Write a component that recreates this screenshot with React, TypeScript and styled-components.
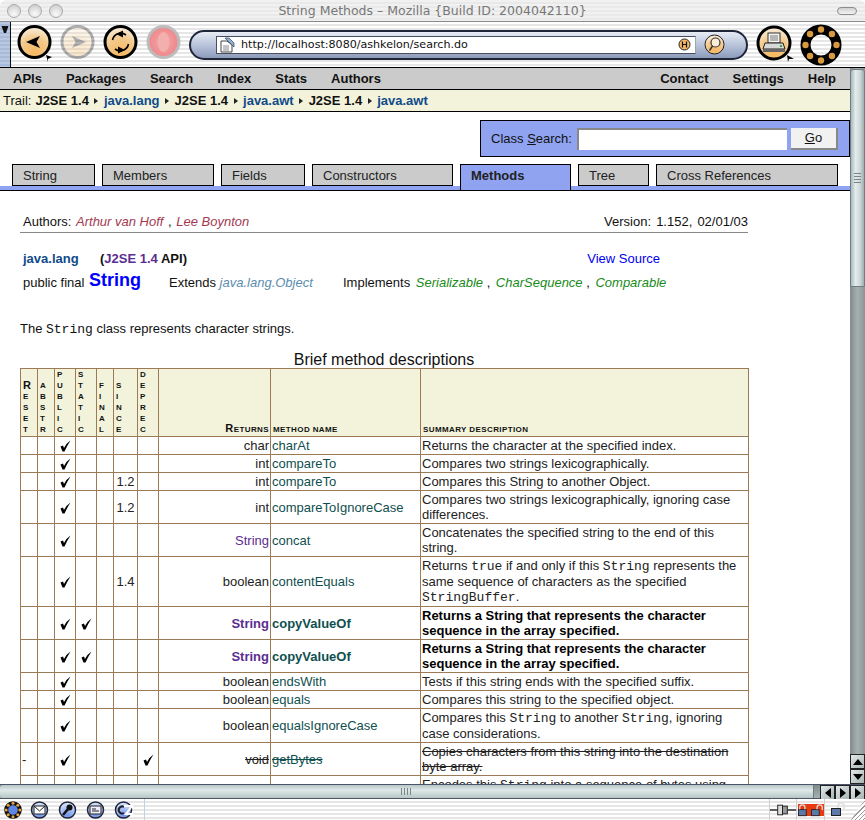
import React from "react";
import styled, { createGlobalStyle } from "styled-components";

const GlobalStyle = createGlobalStyle`
    html, body {
        margin: 0;
        padding: 0;
        background: #fff;
        overflow: hidden;
    }
    body {
        font-family: "Liberation Sans", Arial, sans-serif;
        font-size: 13px;
        color: #111;
    }
`;

const Win = styled.div`
    width: 865px;
    height: 820px;
    display: flex;
    flex-direction: column;
    overflow: hidden;
`;

const pinstripe = `repeating-linear-gradient(180deg, #ffffff 0, #ffffff 2px, #e6e6e6 2px, #e6e6e6 4px)`;

const TitleBar = styled.div`
    height: 21px;
    flex: none;
    display: flex;
    align-items: center;
    position: relative;
    background: repeating-linear-gradient(180deg, #f1f1f1 0, #f1f1f1 2px, #e9e9e9 2px, #e9e9e9 4px);
    border-bottom: 1px solid #8a8a8a;
    border-radius: 6px 6px 0 0;
`;

const Lights = styled.div`
    display: flex;
    gap: 7px;
    padding-left: 7px;
`;

const Light = styled.span`
    width: 14px;
    height: 14px;
    border-radius: 50%;
    border: 1px solid #a8a8a8;
    box-sizing: border-box;
    background: radial-gradient(circle at 50% 75%, #fafafa 0, #dedede 55%, #c4c4c4 100%);
`;

const WinTitle = styled.div`
    flex: 1;
    text-align: center;
    font-family: "DejaVu Sans", sans-serif;
    font-size: 12.5px;
    color: #777;
    margin-right: 35px;
`;

const Pill = styled.span`
    width: 20px;
    height: 8px;
    border: 1px solid #8c8c8c;
    border-radius: 5px;
    box-sizing: border-box;
    margin-right: 8px;
    background: linear-gradient(180deg, #d0d0d0, #f4f4f4);
`;

const Toolbar = styled.div`
    height: 45px;
    flex: none;
    display: flex;
    align-items: center;
    background: ${pinstripe};
    border-bottom: 1px solid #000;
`;

const Grip = styled.div`
    width: 10px;
    align-self: stretch;
    border-right: 1px solid #111;
    background: repeating-linear-gradient(180deg, #b9c8e2 0, #b9c8e2 2px, #a9bad8 2px, #a9bad8 4px);
    display: flex;
    justify-content: center;
    padding-top: 4px;
    margin-right: 2px;
`;

const NavButtons = styled.div`
    display: flex;
    margin-right: 4px;
`;

const UrlPill = styled.div`
    width: 559px;
    height: 30px;
    box-sizing: border-box;
    border: 2px solid #20263a;
    border-radius: 15px;
    background: linear-gradient(180deg, #e6ebf4 0, #bdc8de 45%, #8d9bbb 100%);
    display: flex;
    align-items: center;
    padding-left: 25px;
`;

const UrlField = styled.div`
    width: 480px;
    height: 18px;
    box-sizing: border-box;
    background: #fff;
    border: 1px solid #4a4f60;
    border-right-color: #9aa;
    display: flex;
    align-items: center;
    padding: 0 4px 0 2px;
    font-family: "DejaVu Sans", sans-serif;
    font-size: 11.1px;
    color: #111;
    margin-right: 8px;
`;

const UrlText = styled.span`
    margin-left: 6px;
    flex: 1;
`;

const PrintWrap = styled.div`
    margin-left: 6px;
    display: flex;
`;

const Middle = styled.div`
    flex: 1;
    min-height: 0;
    display: flex;
`;

const Viewport = styled.div`
    width: 850px;
    flex: none;
    overflow: hidden;
    background: #fff;
`;

const VTrack = styled.div`
    width: 15px;
    flex: none;
    display: flex;
    flex-direction: column;
    background: linear-gradient(90deg, #7f8c8c, #a7b0b0 50%, #8b9696);
`;

const VThumb = styled.div`
    height: 218px;
    margin-top: 1px;
    border-radius: 3px 3px 0 0;
    border: 1px solid #6e7c84;
    box-sizing: border-box;
    background: linear-gradient(90deg, #a9b9b9 0, #e4ecec 35%, #cdd8d8 70%, #9eaeae 100%);
    display: flex;
    align-items: center;
    justify-content: center;
`;

const GripLinesH = styled.div`
    width: 7px;
    height: 11px;
    background: repeating-linear-gradient(180deg, #7a8686 0, #7a8686 1px, transparent 1px, transparent 3px);
`;

const Spacer = styled.div`
    flex: 1;
`;

const ArrowBtn = styled.div`
    width: 15px;
    height: 15px;
    flex: none;
    box-sizing: border-box;
    border: 1px solid #222;
    background: linear-gradient(135deg, #e2e8e8, #a8b4b4);
    display: flex;
    align-items: center;
    justify-content: center;
`;

const HBar = styled.div`
    height: 15px;
    flex: none;
    display: flex;
    border-top: 1px solid #4a5568;
    border-bottom: 1px solid #4a5568;
    box-sizing: border-box;
    background: linear-gradient(180deg, #7f8c8c, #a7b0b0);
`;

const HThumb = styled.div`
    width: 814px;
    flex: none;
    border-radius: 3px 0 0 3px;
    border-right: 1px solid #6e7c84;
    box-sizing: border-box;
    background: linear-gradient(180deg, #b7c6c6 0, #e0e9e9 40%, #b6c5c5 100%);
    display: flex;
    align-items: center;
    justify-content: center;
`;

const GripLinesV = styled.div`
    width: 11px;
    height: 7px;
    background: repeating-linear-gradient(90deg, #7a8686 0, #7a8686 1px, transparent 1px, transparent 3px);
`;

const HGap = styled.div`
    width: 6px;
    flex: none;
`;

const StatusBar = styled.div`
    height: 21px;
    flex: none;
    display: flex;
    align-items: center;
    background: ${pinstripe};
`;

const StatusIcons = styled.div`
    width: 145px;
    height: 100%;
    flex: none;
    border-right: 1px solid #c4d0e0;
    display: flex;
    align-items: center;
    gap: 7px;
    padding-left: 4px;
    box-sizing: border-box;
`;

const StatusRight = styled.div`
    margin-left: auto;
    display: flex;
    align-items: center;
    height: 100%;
`;

const StatusCell = styled.div<{ $w: number }>`
    width: ${p => p.$w}px;
    height: 100%;
    box-sizing: border-box;
    display: flex;
    align-items: center;
    justify-content: center;
    border-left: 1px solid #d0d0d0;
`;

const Corner = styled.div`
    width: 14px;
    height: 100%;
    background: repeating-linear-gradient(135deg, #fff 0, #fff 2px, #9a9a9a 2px, #9a9a9a 3px);
    clip-path: polygon(100% 0, 100% 100%, 0 100%);
`;

const MenuBar = styled.div`
    height: 21px;
    background: #cbcbcb;
    border-bottom: 1px solid #000;
    padding: 0 14px 0 13px;
    display: flex;
    align-items: center;
    justify-content: space-between;
    font-weight: bold;
`;

const MenuGroup = styled.div`
    display: flex;
    gap: 24px;
`;

const Trail = styled.div`
    height: 21px;
    background: #f3f3dc;
    border-bottom: 1px solid #000;
    padding-left: 3px;
    display: flex;
    align-items: center;
    font-weight: bold;
`;

const TrailLabel = styled.span`
    font-weight: normal;
    margin-right: 4px;
`;

const TrailLink = styled.span`
    color: #0f4a8a;
`;

const TrailArrow = styled.span`
    width: 0;
    height: 0;
    margin: 0 5.5px;
    border-left: 4px solid #222;
    border-top: 3.5px solid transparent;
    border-bottom: 3.5px solid transparent;
`;

const SearchRow = styled.div`
    display: flex;
    justify-content: flex-end;
    padding-top: 8px;
`;

const SearchBox = styled.form`
    margin: 0;
    width: 370px;
    height: 37px;
    box-sizing: border-box;
    background: #8fa3f0;
    border: 1px solid #000;
    display: flex;
    align-items: center;
    padding-left: 10px;
`;

const SearchLabel = styled.label`
    margin-right: 5px;
`;

const Under = styled.span`
    text-decoration: underline;
`;

const SearchInput = styled.input`
    width: 210px;
    height: 22px;
    box-sizing: border-box;
    background: #fff;
    border: 0;
    border-top: 2px solid #888;
    border-left: 2px solid #888;
    padding: 0;
`;

const GoBtn = styled.button`
    width: 47px;
    height: 22px;
    margin-left: 4px;
    box-sizing: border-box;
    background: #f1f1f1;
    border: 0;
    border-bottom: 2px solid #888;
    border-right: 2px solid #888;
    font-family: inherit;
    font-size: 13px;
    color: #111;
    padding: 0;
`;

const TabRow = styled.div`
    display: flex;
    gap: 7px;
    padding: 7px 0 0 12px;
    height: 22px;
    border-bottom: 4px solid #8fa3f0;
`;

const TabLine = styled.div`
    height: 1px;
    background: #000;
`;

const Tab = styled.div<{ $w: number; $active?: boolean }>`
    width: ${p => p.$w}px;
    box-sizing: border-box;
    border: 1px solid #000;
    border-bottom: ${p => (p.$active ? "none" : "1px solid #000")};
    background: ${p => (p.$active ? "#8fa3f0" : "#cbcbcb")};
    font-weight: ${p => (p.$active ? "bold" : "normal")};
    padding: 3px 0 0 10px;
    height: ${p => (p.$active ? "26px" : "22px")};
    line-height: 15px;
    color: #222;
`;

const Page = styled.div`
    padding: 23px 0 0 20px;
    width: 728px;
`;

const AuthorRow = styled.div`
    display: flex;
    justify-content: space-between;
    height: 18px;
    line-height: 15px;
    padding-left: 3px;
    border-bottom: 1px solid #888;
`;

const AuthorName = styled.em`
    color: #a33a50;
    margin: 0 1px 0 1px;
`;

const Version = styled.span`
    word-spacing: 1.5px;
`;

const InfoBlock = styled.div`
    padding: 18px 0 0 3px;
    width: 637px;
`;

const PackageRow = styled.div`
    display: flex;
    height: 16px;
    line-height: 16px;
    font-weight: bold;
`;

const PackageName = styled.span`
    color: #0f4a8a;
    width: 77px;
`;

const Purple = styled.span`
    color: #5c2d91;
`;

const ViewSource = styled.span`
    margin-left: auto;
    color: #0000ee;
    font-weight: normal;
`;

const ClassRow = styled.div`
    display: grid;
    grid-template-columns: 146px 174px auto;
    align-items: start;
    margin-top: 3px;
    height: 24px;
    white-space: nowrap;
`;

const ClassLead = styled.span`
    line-height: 22px;
`;

const ClassCell = styled.span`
    padding-top: 5px;
    line-height: 15px;
`;

const ClassName = styled.strong`
    color: #0000ff;
    font-size: 18px;
    margin-left: 1px;
    position: relative;
    top: -1px;
`;

const SteelLink = styled.em`
    color: #5b8db0;
`;

const GreenLink = styled.em`
    color: #1a8a1a;
    margin-left: 2px;
`;

const Intro = styled.p`
    margin: 27px 0 0 0;
    line-height: 15px;
`;

const Mono = styled.code`
    font-family: "Liberation Mono", "Courier New", monospace;
    font-size: 13px;
`;

const Caption = styled.div`
    margin-top: 14px;
    font-size: 16px;
    line-height: 17px;
    text-align: center;
    width: 728px;
`;

const Table = styled.table`
    border-collapse: collapse;
    table-layout: fixed;
    width: 729px;
`;

const HeadCell = styled.th<{ $align?: string }>`
    background: #f3f3dc;
    border: 1px solid #9c7a55;
    padding: 0 1px 1px 2px;
    vertical-align: bottom;
    text-align: ${p => p.$align || "left"};
    font-size: 8px;
    font-weight: bold;
    line-height: 11px;
    letter-spacing: 0.4px;
    color: #111;
    text-transform: uppercase;
`;

const VLetter = styled.span<{ $big?: boolean }>`
    display: block;
    font-size: ${p => (p.$big ? "11px" : "8px")};
`;

const BigCap = styled.span`
    font-size: 11px;
`;

const Cell = styled.td<{ $align?: string; $bold?: boolean; $strike?: boolean; $color?: string }>`
    border: 1px solid #9c7a55;
    padding: 1px;
    line-height: 15px;
    font-size: 13px;
    text-align: ${p => p.$align || "left"};
    font-weight: ${p => (p.$bold ? "bold" : "normal")};
    text-decoration: ${p => (p.$strike ? "line-through" : "none")};
    color: ${p => p.$color || "#222"};
`;

const Check = styled.span`
    display: block;
    width: 10px;
    height: 11px;
    margin-left: 4px;
`;

const SecurityBadge = styled.div`
    width: 26px;
    height: 12px;
    background: #e83a10;
    display: flex;
    justify-content: center;
`;

function Gradients() {
    return (
        <svg width="0" height="0" style={{ position: "absolute" }}>
            <defs>
                <radialGradient id="orange" cx="50%" cy="85%" r="80%">
                    <stop offset="0" stopColor="#f6b860" />
                    <stop offset="0.6" stopColor="#f3c98c" />
                    <stop offset="1" stopColor="#f8ecd8" />
                </radialGradient>
                <radialGradient id="red" cx="50%" cy="50%" r="55%">
                    <stop offset="0" stopColor="#f4a8a8" />
                    <stop offset="1" stopColor="#ee8388" />
                </radialGradient>
                <radialGradient id="blueBtn" cx="50%" cy="85%" r="85%">
                    <stop offset="0" stopColor="#6f94ea" />
                    <stop offset="1" stopColor="#dfe8fa" />
                </radialGradient>
            </defs>
        </svg>
    );
}

function BackIcon() {
    return (
        <svg width="43" height="45" viewBox="0 0 43 45">
            <circle cx="21.5" cy="20" r="15.5" fill="url(#orange)" stroke="#000" strokeWidth="3" />
            <path d="M13 20 L27 14 L23.5 20 L27 26 Z" fill="#000" />
            <path d="M33 33 L39 35 L35 37 L35 40 Z" fill="#000" />
        </svg>
    );
}

function ForwardIcon() {
    return (
        <svg width="43" height="45" viewBox="0 0 43 45" opacity="0.3">
            <circle cx="21.5" cy="20" r="15.5" fill="url(#orange)" stroke="#000" strokeWidth="3" />
            <path d="M30 20 L16 14 L19.5 20 L16 26 Z" fill="#000" />
        </svg>
    );
}

function ReloadIcon() {
    return (
        <svg width="43" height="45" viewBox="0 0 43 45">
            <circle cx="21.5" cy="20" r="15.5" fill="url(#orange)" stroke="#000" strokeWidth="3" />
            <path d="M13.5 18 A8.5 8.5 0 0 1 27 13" fill="none" stroke="#000" strokeWidth="1.6" />
            <path d="M29.5 22 A8.5 8.5 0 0 1 16 27" fill="none" stroke="#000" strokeWidth="1.6" />
            <path d="M17 12 L24 8.5 L24 15.5 Z" fill="#000" />
            <path d="M26 28 L19 24.5 L19 31.5 Z" fill="#000" />
        </svg>
    );
}

function StopIcon() {
    return (
        <svg width="43" height="45" viewBox="0 0 43 45">
            <circle cx="21.5" cy="20" r="15.5" fill="url(#red)" stroke="#bcbcbc" strokeWidth="3" />
            <ellipse cx="21.5" cy="20" rx="6" ry="10" fill="#f3aeae" />
        </svg>
    );
}

function PrintIcon() {
    return (
        <svg width="46" height="45" viewBox="0 0 46 45">
            <circle cx="20" cy="21" r="16" fill="url(#orange)" stroke="#000" strokeWidth="3" />
            <rect x="14" y="11" width="12" height="10" fill="#f4f4f4" stroke="#333" />
            <path d="M16 14h8M16 16h8M16 18h8" stroke="#777" strokeWidth="1" />
            <path d="M11 21 H29 L31 27 H9 Z" fill="#d8d8d8" stroke="#222" />
            <rect x="9" y="27" width="22" height="3" fill="#666" />
            <rect x="26" y="23" width="2" height="2" fill="#3a3" />
            <path d="M33 33 L40 37 L35 37 L34 40 Z" fill="#000" />
        </svg>
    );
}

function RingIcon() {
    const dots = [0, 45, 90, 135, 180, 225, 270, 315];
    return (
        <svg width="42" height="42" viewBox="0 0 42 42">
            <circle cx="21" cy="21" r="15.5" fill="none" stroke="#000" strokeWidth="10" />
            {dots.map(d => (
                <circle
                    key={d}
                    cx={21 + 15.5 * Math.cos((d * Math.PI) / 180)}
                    cy={21 + 15.5 * Math.sin((d * Math.PI) / 180)}
                    r="3.2"
                    fill="#d99a3f"
                />
            ))}
        </svg>
    );
}

function SiteIcon() {
    return (
        <svg width="16" height="16" viewBox="0 0 16 16">
            <path d="M2 4 H8 L13 8 V15 H2 Z" fill="#fff" stroke="#444" />
            <path d="M4 9h6M4 11h6M4 13h6" stroke="#888" />
            <path d="M6 1 L10 1 L15 6 L15 10 L10 5 Z" fill="#8fb0d8" stroke="#345" strokeWidth="0.7" />
        </svg>
    );
}

function HistoryIcon() {
    return (
        <svg width="13" height="13" viewBox="0 0 13 13">
            <circle cx="6.5" cy="6.5" r="5.5" fill="#f1b766" stroke="#222" />
            <path d="M4.5 3.5V9.5M8.5 3.5V9.5M4.5 6.5H8.5" stroke="#111" strokeWidth="1.2" fill="none" />
        </svg>
    );
}

function SearchIcon() {
    return (
        <svg width="21" height="21" viewBox="0 0 21 21">
            <circle cx="10.5" cy="10.5" r="9.5" fill="url(#orange)" stroke="#222" />
            <circle cx="11.5" cy="8.5" r="4.5" fill="#fbeed8" stroke="#333" strokeWidth="1.2" />
            <path d="M8.5 12 L5.5 16.5" stroke="#333" strokeWidth="1.5" />
        </svg>
    );
}

function Triangle({ dir }: { dir: "up" | "down" | "left" | "right" }) {
    const d = {
        up: "M5 2 L10 8 L0 8 Z",
        down: "M0 2 L10 2 L5 8 Z",
        left: "M2 5 L8 0 L8 10 Z",
        right: "M8 5 L2 0 L2 10 Z",
    }[dir];
    return (
        <svg width="10" height="10" viewBox="0 0 10 10">
            <path d={d} fill="#000" />
        </svg>
    );
}

function MiniRing() {
    const dots = [0, 45, 90, 135, 180, 225, 270, 315];
    return (
        <svg width="18" height="18" viewBox="0 0 18 18">
            <circle cx="9" cy="9" r="7.5" fill="#5f86e6" />
            <circle cx="9" cy="9" r="6.8" fill="none" stroke="#111" strokeWidth="4" />
            {dots.map(d => (
                <circle
                    key={d}
                    cx={9 + 6.8 * Math.cos((d * Math.PI) / 180)}
                    cy={9 + 6.8 * Math.sin((d * Math.PI) / 180)}
                    r="1.5"
                    fill="#e5a33f"
                />
            ))}
        </svg>
    );
}

function MiniBtn({ children }: { children: React.ReactNode }) {
    return (
        <svg width="21" height="18" viewBox="0 0 21 18">
            <circle cx="10.5" cy="9" r="8" fill="url(#blueBtn)" stroke="#20263a" strokeWidth="1.5" />
            {children}
        </svg>
    );
}

function PlugIcon() {
    return (
        <svg width="27" height="12" viewBox="0 0 27 12">
            <path d="M0 6H8M18 6H27" stroke="#333" strokeWidth="1.5" />
            <rect x="8" y="1" width="5" height="10" fill="#ddd" stroke="#222" />
            <rect x="13" y="2" width="5" height="8" fill="#999" stroke="#222" />
        </svg>
    );
}

function LockIcon({ open }: { open?: boolean }) {
    return (
        <svg width="15" height="13" viewBox="0 0 15 13">
            <rect x="0.5" y="5.5" width="9" height="7" fill="#5b7aa8" stroke="#222" />
            <path
                d={open ? "M7 5 V3 A3 3 0 0 1 13 3 V6" : "M2 5 V3 A3 3 0 0 1 8 3 V5"}
                fill="none"
                stroke="#ddd"
                strokeWidth="1.5"
            />
        </svg>
    );
}

type Row = {
    reset?: string;
    stat?: boolean;
    since?: string;
    deprec?: boolean;
    ret: string;
    name: string;
    summary: React.ReactNode;
    bold?: boolean;
};

const rows: Row[] = [
    { ret: "char", name: "charAt", summary: "Returns the character at the specified index." },
    { ret: "int", name: "compareTo", summary: "Compares two strings lexicographically." },
    { since: "1.2", ret: "int", name: "compareTo", summary: "Compares this String to another Object." },
    { since: "1.2", ret: "int", name: "compareToIgnoreCase", summary: "Compares two strings lexicographically, ignoring case differences." },
    { ret: "String", name: "concat", summary: "Concatenates the specified string to the end of this string." },
    {
        since: "1.4",
        ret: "boolean",
        name: "contentEquals",
        summary: (
            <>
                Returns <Mono>true</Mono> if and only if this <Mono>String</Mono> represents the same sequence of characters as the specified <Mono>StringBuffer</Mono>.
            </>
        ),
    },
    { stat: true, bold: true, ret: "String", name: "copyValueOf", summary: "Returns a String that represents the character sequence in the array specified." },
    { stat: true, bold: true, ret: "String", name: "copyValueOf", summary: "Returns a String that represents the character sequence in the array specified." },
    { ret: "boolean", name: "endsWith", summary: "Tests if this string ends with the specified suffix." },
    { ret: "boolean", name: "equals", summary: "Compares this string to the specified object." },
    {
        ret: "boolean",
        name: "equalsIgnoreCase",
        summary: (
            <>
                Compares this <Mono>String</Mono> to another <Mono>String</Mono>, ignoring case considerations.
            </>
        ),
    },
    { reset: "-", deprec: true, ret: "void", name: "getBytes", summary: "Copies characters from this string into the destination byte array." },
    {
        ret: "byte[]",
        name: "getBytes",
        summary: (
            <>
                Encodes this <Mono>String</Mono> into a sequence of bytes using the named charset.
            </>
        ),
    },
];

const flagHeads = ["reset", "abstr", "public", "static", "final", "since", "deprec"];
const colWidths = [17, 17, 21, 21, 17, 24, 21, 112, 150, 328];

function Tick() {
    return (
        <Check>
            <svg width="11" height="12" viewBox="0 0 11 12">
                <path d="M0.5 6.5 L3 5.5 L4 8 Q6.5 3 10.5 0.5 Q7.5 5 4.5 11.5 L2.5 11.5 Z" fill="#000" />
            </svg>
        </Check>
    );
}

export default function App() {
    return (
        <Win>
            <GlobalStyle />
            <Gradients />
            <TitleBar>
                <Lights>
                    <Light />
                    <Light />
                    <Light />
                </Lights>
                <WinTitle>String Methods – Mozilla {"{"}Build ID: 2004042110{"}"}</WinTitle>
                <Pill />
            </TitleBar>
            <Toolbar>
                <Grip>
                    <svg width="8" height="8" viewBox="0 0 8 8">
                        <path d="M0.5 0 H7.5 L5 7 H3 Z" fill="#111" />
                    </svg>
                </Grip>
                <NavButtons>
                    <BackIcon />
                    <ForwardIcon />
                    <ReloadIcon />
                    <StopIcon />
                </NavButtons>
                <UrlPill>
                    <UrlField>
                        <SiteIcon />
                        <UrlText>http://localhost:8080/ashkelon/search.do</UrlText>
                        <HistoryIcon />
                    </UrlField>
                    <SearchIcon />
                </UrlPill>
                <PrintWrap>
                    <PrintIcon />
                </PrintWrap>
                <RingIcon />
            </Toolbar>
            <Middle>
                <Viewport>
                    <MenuBar>
                        <MenuGroup>
                            <span>APIs</span>
                            <span>Packages</span>
                            <span>Search</span>
                            <span>Index</span>
                            <span>Stats</span>
                            <span>Authors</span>
                        </MenuGroup>
                        <MenuGroup>
                            <span>Contact</span>
                            <span>Settings</span>
                            <span>Help</span>
                        </MenuGroup>
                    </MenuBar>
                    <Trail>
                        <TrailLabel>Trail:</TrailLabel>
                        J2SE 1.4<TrailArrow />
                        <TrailLink>java.lang</TrailLink>
                        <TrailArrow />J2SE 1.4<TrailArrow />
                        <TrailLink>java.awt</TrailLink>
                        <TrailArrow />J2SE 1.4<TrailArrow />
                        <TrailLink>java.awt</TrailLink>
                    </Trail>
                    <SearchRow>
                        <SearchBox>
                            <SearchLabel>
                                Class <Under>S</Under>earch:
                            </SearchLabel>
                            <SearchInput />
                            <GoBtn type="button">
                                <Under>G</Under>o
                            </GoBtn>
                        </SearchBox>
                    </SearchRow>
                    <TabRow>
                        <Tab $w={83}>String</Tab>
                        <Tab $w={112}>Members</Tab>
                        <Tab $w={84}>Fields</Tab>
                        <Tab $w={141}>Constructors</Tab>
                        <Tab $w={111} $active>Methods</Tab>
                        <Tab $w={71}>Tree</Tab>
                        <Tab $w={182}>Cross References</Tab>
                    </TabRow>
                    <TabLine />
                    <Page>
                        <AuthorRow>
                            <span>
                                Authors: <AuthorName>Arthur van Hoff</AuthorName> , <AuthorName>Lee Boynton</AuthorName>
                            </span>
                            <Version>Version: 1.152, 02/01/03</Version>
                        </AuthorRow>
                        <InfoBlock>
                            <PackageRow>
                                <PackageName>java.lang</PackageName>
                                <span>
                                    (<Purple>J2SE 1.4</Purple> API)
                                </span>
                                <ViewSource>View Source</ViewSource>
                            </PackageRow>
                            <ClassRow>
                                <ClassLead>
                                    public final <ClassName>String</ClassName>
                                </ClassLead>
                                <ClassCell>
                                    Extends <SteelLink>java.lang.Object</SteelLink>
                                </ClassCell>
                                <ClassCell>
                                    Implements <GreenLink>Serializable</GreenLink> , <GreenLink>CharSequence</GreenLink> , <GreenLink>Comparable</GreenLink>
                                </ClassCell>
                            </ClassRow>
                        </InfoBlock>
                        <Intro>
                            The <Mono>String</Mono> class represents character strings.
                        </Intro>
                        <Caption>Brief method descriptions</Caption>
                        <Table>
                            <colgroup>
                                {colWidths.map((w, i) => (
                                    <col key={i} width={w} />
                                ))}
                            </colgroup>
                            <thead>
                                <tr>
                                    {flagHeads.map(h => (
                                        <HeadCell key={h}>
                                            {h.split("").map((c, i) => (
                                                <VLetter key={i} $big={h === "reset" && i === 0}>
                                                    {c}
                                                </VLetter>
                                            ))}
                                        </HeadCell>
                                    ))}
                                    <HeadCell $align="right">
                                        <BigCap>R</BigCap>eturns
                                    </HeadCell>
                                    <HeadCell>Method Name</HeadCell>
                                    <HeadCell>Summary Description</HeadCell>
                                </tr>
                            </thead>
                            <tbody>
                                {rows.map((r, i) => (
                                    <tr key={i}>
                                        <Cell>{r.reset}</Cell>
                                        <Cell />
                                        <Cell>
                                            <Tick />
                                        </Cell>
                                        <Cell>{r.stat && <Tick />}</Cell>
                                        <Cell />
                                        <Cell $align="center">{r.since}</Cell>
                                        <Cell>{r.deprec && <Tick />}</Cell>
                                        <Cell
                                            $align="right"
                                            $bold={r.bold}
                                            $strike={r.deprec}
                                            $color={r.ret === "String" ? "#5c2d91" : "#222"}
                                        >
                                            {r.ret}
                                        </Cell>
                                        <Cell $bold={r.bold} $strike={r.deprec} $color="#0f4f4f">
                                            {r.name}
                                        </Cell>
                                        <Cell $bold={r.bold} $strike={r.deprec} $color={r.bold ? "#000" : "#222"}>
                                            {r.summary}
                                        </Cell>
                                    </tr>
                                ))}
                            </tbody>
                        </Table>
                    </Page>
                </Viewport>
                <VTrack>
                    <VThumb>
                        <GripLinesH />
                    </VThumb>
                    <Spacer />
                    <ArrowBtn>
                        <Triangle dir="up" />
                    </ArrowBtn>
                    <ArrowBtn>
                        <Triangle dir="down" />
                    </ArrowBtn>
                </VTrack>
            </Middle>
            <HBar>
                <HThumb>
                    <GripLinesV />
                </HThumb>
                <HGap />
                <ArrowBtn>
                    <Triangle dir="left" />
                </ArrowBtn>
                <ArrowBtn>
                    <Triangle dir="right" />
                </ArrowBtn>
                <ArrowBtn>
                    <Triangle dir="right" />
                </ArrowBtn>
            </HBar>
            <StatusBar>
                <StatusIcons>
                    <MiniRing />
                    <MiniBtn>
                        <rect x="5" y="5" width="11" height="8" fill="#fff" stroke="#222" />
                        <path d="M5 5 L10.5 10 L16 5" fill="none" stroke="#222" />
                    </MiniBtn>
                    <MiniBtn>
                        <path d="M6 14 L11 8" stroke="#111" strokeWidth="2.5" />
                        <circle cx="12.5" cy="6.5" r="3" fill="#111" />
                    </MiniBtn>
                    <MiniBtn>
                        <rect x="5" y="5" width="11" height="8" fill="#eef" stroke="#222" />
                        <path d="M7 8h4M7 10h7" stroke="#222" />
                    </MiniBtn>
                    <MiniBtn>
                        <path d="M11 6 A3.5 3.5 0 1 0 11 12" fill="none" stroke="#223" strokeWidth="2" />
                        <path d="M11 5 H19 L13 13 H20" fill="none" stroke="#fff" strokeWidth="2" />
                    </MiniBtn>
                </StatusIcons>
                <StatusRight>
                    <StatusCell $w={27}>
                        <PlugIcon />
                    </StatusCell>
                    <StatusCell $w={28}>
                        <SecurityBadge>
                            <LockIcon />
                            <LockIcon open />
                        </SecurityBadge>
                    </StatusCell>
                    <StatusCell $w={27}>
                        <LockIcon open />
                    </StatusCell>
                    <Corner />
                </StatusRight>
            </StatusBar>
        </Win>
    );
}
